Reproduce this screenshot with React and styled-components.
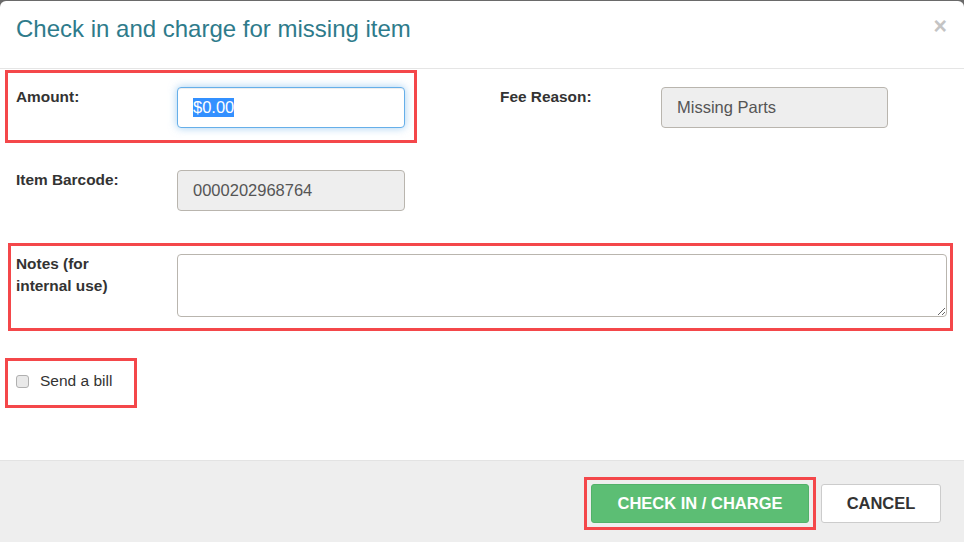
import styled, { createGlobalStyle } from "styled-components"

const GlobalStyle = createGlobalStyle`
    html, body {
        margin: 0;
        padding: 0;
        background: #6a6a6a;
        height: 100%;
        overflow: hidden;
    }
    body {
        font-family: "Liberation Sans", Arial, sans-serif;
        color: #333;
    }
    #root {
        height: 100%;
    }
`

export default function App() {
    return (
        <>
            <GlobalStyle />
            <Modal>
                <Header>
                    <Title>Check in and charge for missing item</Title>
                    <Close aria-label="Close">×</Close>
                </Header>

                <Body>
                    <Row>
                        <Mark top={14} right={9} bottom={12} left={8} shift={11}>
                            <Field>
                                <Label>Amount:</Label>
                                <FakeInput>
                                    <Selected>$0.00</Selected>
                                </FakeInput>
                            </Field>
                        </Mark>
                        <Field style={{ marginLeft: 83, marginTop: 17 }}>
                            <Label>Fee Reason:</Label>
                            <Input disabled value="Missing Parts" w={227} readOnly />
                        </Field>
                    </Row>

                    <Row gap={27}>
                        <Field>
                            <Label>Item Barcode:</Label>
                            <Input disabled value="0000202968764" w={228} readOnly />
                        </Field>
                    </Row>

                    <Row gap={32}>
                        <Mark top={8} right={3} bottom={11} left={5} shift={8}>
                            <Field>
                                <Label>Notes (for<br />internal use)</Label>
                                <Notes />
                            </Field>
                        </Mark>
                    </Row>

                    <Row gap={27}>
                        <Mark top={9} right={22} bottom={13} left={8} shift={11}>
                            <Check>
                                <Box type="checkbox" />
                                <span>Send a bill</span>
                            </Check>
                        </Mark>
                    </Row>
                </Body>

                <Footer>
                    <Mark top={4} right={4} bottom={4} left={4} shift={0}>
                        <Button primary>CHECK IN / CHARGE</Button>
                    </Mark>
                    <Button>CANCEL</Button>
                </Footer>
            </Modal>
        </>
    )
}

const Modal = styled.div`
    box-sizing: border-box;
    height: calc(100% - 1px);
    margin-top: 1px;
    background: #fff;
    border-radius: 6px 6px 0 0;
    display: flex;
    flex-direction: column;
    overflow: hidden;
`

const Header = styled.div`
    display: flex;
    justify-content: space-between;
    align-items: flex-start;
    padding: 14px 17px 26px 16px;
    border-bottom: 1px solid #e5e5e5;
`

const Title = styled.h4`
    margin: 0;
    font-size: 24px;
    line-height: 27px;
    font-weight: 400;
    color: #2e7b8b;
`

const Close = styled.button`
    border: 0;
    background: none;
    padding: 0;
    font-family: "Liberation Sans", Arial, sans-serif;
    font-size: 23px;
    line-height: 23px;
    font-weight: 700;
    color: #c4c4c4;
    cursor: pointer;
`

const Body = styled.div`
    padding: 1px 0 52px 16px;
`

const Row = styled.div`
    display: flex;
    align-items: flex-start;
    margin-top: ${props => props.gap || 0}px;
`

const Mark = styled.div`
    display: inline-flex;
    flex: none;
    border: 3px solid #f4474a;
    margin-left: -${props => props.shift}px;
    padding: ${props => `${props.top}px ${props.right}px ${props.bottom}px ${props.left}px`};
`

const Field = styled.div`
    display: flex;
    align-items: flex-start;
`

const Label = styled.label`
    width: 161px;
    flex: none;
    font-size: 15.4px;
    line-height: 22px;
    font-weight: 700;
    color: #333;
    margin-top: -1px;
`

const Input = styled.input`
    box-sizing: border-box;
    width: ${props => props.w}px;
    height: 41px;
    padding: 0 15px;
    font-family: "Liberation Sans", Arial, sans-serif;
    font-size: 16.5px;
    color: #555;
    background: #eee;
    border: 1px solid #b9b5ae;
    border-radius: 4px;
    &:disabled {
        opacity: 1;
        -webkit-text-fill-color: #555;
    }
`

const FakeInput = styled.div`
    box-sizing: border-box;
    width: 228px;
    height: 41px;
    padding: 0 15px;
    display: flex;
    align-items: center;
    font-size: 16.5px;
    color: #555;
    background: #fff;
    border: 1px solid #66afe9;
    border-radius: 4px;
    box-shadow: inset 0 1px 1px rgba(0, 0, 0, .075), 0 0 8px rgba(102, 175, 233, .6);
`

const Selected = styled.span`
    background: #3390ff;
    color: #fff;
    line-height: 19px;
`

const Notes = styled.textarea`
    box-sizing: border-box;
    width: 770px;
    height: 63px;
    border: 1px solid #b9b5ae;
    border-radius: 4px;
    font-family: "Liberation Sans", Arial, sans-serif;
    font-size: 16.5px;
    padding: 6px 15px;
    background: #fff;
`

const Check = styled.label`
    display: flex;
    align-items: center;
    gap: 11px;
    font-size: 15.5px;
    line-height: 22px;
    color: #333;
`

const Box = styled.input`
    margin: 0;
    width: 13px;
    height: 13px;
    appearance: none;
    border: 1px solid #b0b0b0;
    border-radius: 3px;
    background: #e9e9e9;
`

const Footer = styled.div`
    flex: 1;
    display: flex;
    justify-content: flex-end;
    align-items: flex-start;
    gap: 5px;
    padding: 16px 23px 0 0;
    background: #eee;
    border-top: 1px solid #e3e3e3;
    & > button {
        margin-top: 7px;
    }
`

const Button = styled.button`
    box-sizing: border-box;
    width: ${props => props.primary ? 218 : 120}px;
    height: 39px;
    font-family: "Liberation Sans", Arial, sans-serif;
    font-size: 16.5px;
    font-weight: 700;
    color: ${props => props.primary ? '#fff' : '#333'};
    background: ${props => props.primary ? '#5cbe74' : '#fff'};
    border: 1px solid ${props => props.primary ? '#52b169' : '#ccc'};
    border-radius: 3px;
    padding: 0;
    cursor: pointer;
`
